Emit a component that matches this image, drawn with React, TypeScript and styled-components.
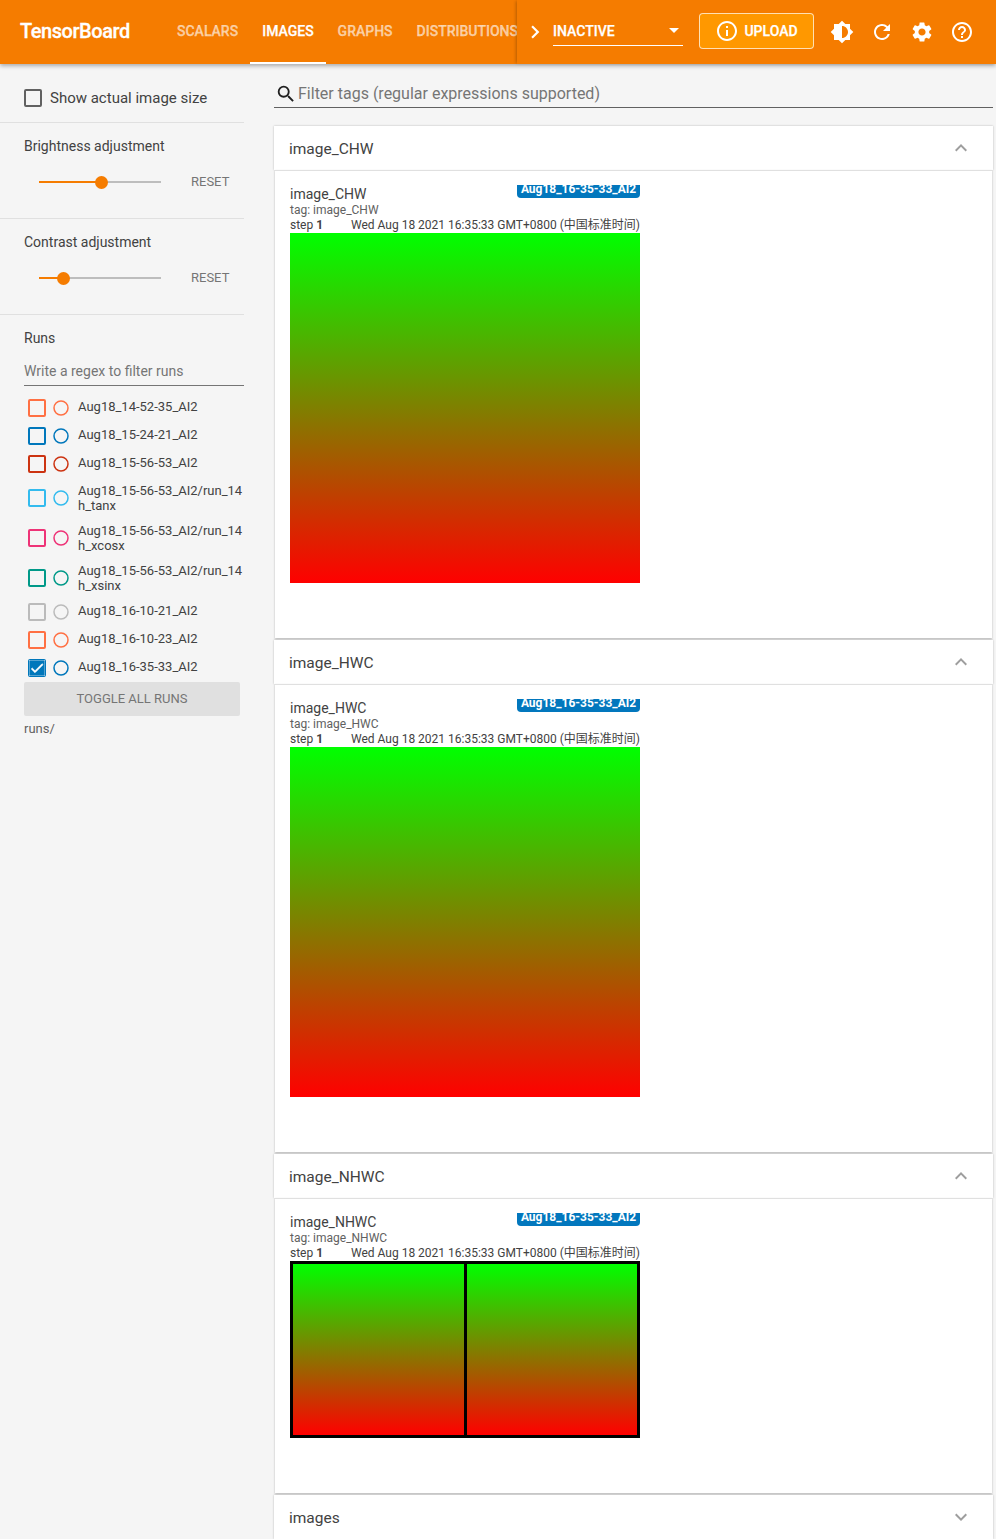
import React from 'react';
import styled, { createGlobalStyle } from 'styled-components';
import { MdBrightness6, MdRefresh, MdSettings, MdHelpOutline, MdInfoOutline, MdSearch, MdExpandLess, MdExpandMore, MdChevronRight, MdCheck } from 'react-icons/md';

const Global = createGlobalStyle`
  html, body { margin: 0; padding: 0; background: #f5f5f5; }
  body { font-family: Roboto, "Noto Sans CJK SC", sans-serif; color: #424242; }
  * { box-sizing: border-box; }
  #root { width: 996px; height: 1539px; overflow: hidden; }
`;

const Page = styled.div`
  width: 996px;
  height: 1539px;
  display: flex;
  flex-direction: column;
  overflow: hidden;
`;
const Header = styled.header`
  height: 64px;
  flex: none;
  background: #f57c00;
  color: #fff;
  display: flex;
  align-items: stretch;
  position: relative;
  z-index: 2;
  box-shadow: 0 2px 4px rgba(0, 0, 0, 0.3);
`;
const Logo = styled.div`
  width: 165px;
  flex: none;
  padding-left: 20px;
  font-size: 20px;
  font-weight: 500;
  line-height: 63px;
  letter-spacing: -0.45px;
  -webkit-text-stroke: 0.3px #fff;
`;
const Tabs = styled.nav`
  width: 352px;
  flex: none;
  display: flex;
  overflow: hidden;
`;
const Tab = styled.div<{ $active?: boolean }>`
  flex: none;
  height: 64px;
  padding: 0 12px;
  line-height: 62px;
  font-size: 14px;
  font-weight: 500;
  color: ${p => (p.$active ? '#fff' : 'rgba(255, 255, 255, 0.6)')};
  -webkit-text-stroke: 0.25px ${p => (p.$active ? '#fff' : 'rgba(255, 255, 255, 0.6)')};
  border-bottom: 2px solid ${p => (p.$active ? '#fff' : 'transparent')};
`;
const Right = styled.div`
  flex: 1;
  display: flex;
  align-items: center;
  box-shadow: -2px 0 3px -1px rgba(0, 0, 0, 0.25);
`;
const Chevron = styled.div`
  width: 36px;
  flex: none;
  display: flex;
  justify-content: center;
  svg { display: block; }
`;
const Select = styled.div`
  width: 130px;
  height: 30px;
  margin-bottom: 3px;
  padding: 1px 4px 0 0;
  flex: none;
  border-bottom: 1px solid #fff;
  display: flex;
  align-items: center;
  justify-content: space-between;
  font-size: 14px;
  font-weight: 500;
  -webkit-text-stroke: 0.25px #fff;
`;
const Caret = styled.span`
  width: 0;
  height: 0;
  border-left: 5px solid transparent;
  border-right: 5px solid transparent;
  border-top: 5px solid #fff;
`;
const Upload = styled.div`
  width: 115px;
  height: 36px;
  margin: 0 0 2px 16px;
  flex: none;
  background: #ff9800;
  border: 1px solid rgba(255, 255, 255, 0.7);
  border-radius: 4px;
  display: flex;
  align-items: center;
  justify-content: center;
  gap: 5px;
  font-size: 14px;
  font-weight: 500;
  -webkit-text-stroke: 0.25px #fff;
  padding-bottom: 1px;
  svg { display: block; -webkit-text-stroke: 0; }
`;
const Icons = styled.div`
  display: flex;
  margin-left: 8px;
`;
const IconButton = styled.div`
  width: 40px;
  height: 40px;
  display: flex;
  align-items: center;
  justify-content: center;
  svg { display: block; }
`;

const Body = styled.div`
  flex: 1;
  display: flex;
  min-height: 0;
`;
const Sidebar = styled.aside`
  width: 274px;
  flex: none;
  padding-right: 30px;
`;
const Section = styled.section`
  border-bottom: 1px solid #e0e0e0;
  padding: 15px 0 0 24px;
`;
const ActualRow = styled.div`
  height: 59px;
  display: flex;
  align-items: center;
  gap: 8px;
  padding: 10px 0 0 24px;
  border-bottom: 1px solid #e0e0e0;
  font-size: 15px;
  color: #424242;
`;
const PlainBox = styled.span`
  width: 18px;
  height: 18px;
  border: 2px solid #616161;
  border-radius: 2px;
  flex: none;
`;
const Label = styled.div`
  font-size: 14px;
  line-height: 16px;
  color: #424242;
`;
const SliderSection = styled(Section)`
  height: 96px;
`;
const SliderRow = styled.div`
  display: flex;
  align-items: center;
  height: 20px;
  margin-top: 18px;
  padding-left: 15px;
`;
const Track = styled.div`
  width: 122px;
  height: 2px;
  background: #bdbdbd;
  position: relative;
`;
const Fill = styled.div`
  height: 2px;
  background: #f57c00;
`;
const Thumb = styled.div`
  position: absolute;
  top: -5.5px;
  width: 13px;
  height: 13px;
  margin-left: -6px;
  border-radius: 50%;
  background: #f57c00;
`;
const Reset = styled.div`
  margin: 0 0 2px 30px;
  font-size: 13px;
  color: #757575;
`;
const RunsSection = styled.section`
  padding: 15px 0 0 24px;
`;
const RegexInput = styled.div`
  height: 31px;
  margin-top: 9px;
  border-bottom: 1px solid #757575;
  font-size: 14px;
  line-height: 25px;
  padding-top: 4px;
  color: #757575;
`;
const RunList = styled.div`
  margin: 8px 0 0 4px;
`;
const RunRow = styled.div<{ $tall?: boolean }>`
  height: ${p => (p.$tall ? 40 : 28)}px;
  display: flex;
  align-items: center;
`;
const RunBox = styled.span<{ $c: string; $on?: boolean }>`
  width: 18px;
  height: 18px;
  flex: none;
  border: 2px solid ${p => p.$c};
  background: ${p => (p.$on ? p.$c : 'transparent')};
  border-radius: 2px;
  color: #fff;
  display: flex;
  align-items: center;
  justify-content: center;
  svg { display: block; flex: none; }
`;
const RunDot = styled.svg`
  width: 16px;
  height: 16px;
  flex: none;
  margin-left: 7px;
  display: block;
`;
const RunName = styled.span<{ $tall?: boolean }>`
  margin-left: 9px;
  width: 166px;
  font-size: 13px;
  line-height: 15px;
  color: #424242;
  word-break: break-all;
  margin-top: ${p => (p.$tall ? 0 : -4)}px;
`;
const ToggleAll = styled.div`
  width: 216px;
  height: 34px;
  background: #e0e0e0;
  border-radius: 2px;
  text-align: center;
  font-size: 13px;
  line-height: 34px;
  color: #757575;
`;
const RunsDir = styled.div`
  margin-top: 6px;
  font-size: 13px;
  line-height: 14px;
  color: #616161;
`;

const Main = styled.main`
  width: 719px;
  flex: none;
`;
const FilterBar = styled.div`
  height: 44px;
  border-bottom: 1px solid #616161;
  display: flex;
  align-items: center;
  padding-top: 16px;
  padding-left: 1px;
  gap: 1px;
  font-size: 16px;
  color: #757575;
  svg { display: block; color: #212121; flex: none; }
`;
const Cards = styled.div`
  margin-top: 18px;
  display: flex;
  flex-direction: column;
  gap: 2px;
`;
const Card = styled.section`
  display: flex;
  flex-direction: column;
`;
const CardHeader = styled.div`
  height: 44px;
  padding: 0 20px 0 15px;
  background: #fff;
  box-shadow: 0 0 2px rgba(0, 0, 0, 0.25);
  display: flex;
  align-items: center;
  justify-content: space-between;
  svg { display: block; color: #9e9e9e; }
`;
const CardTitle = styled.span`
  margin-top: 2px;
  font-size: 15.5px;
  color: #424242;
`;
const CardBody = styled.div<{ $h: number }>`
  height: ${p => p.$h}px;
  margin: 0 1px;
  background: #fff;
  box-shadow: 0 1px 2px rgba(0, 0, 0, 0.25);
  border-top: 1px solid #e0e0e0;
  padding: 14px 15px 0;
`;
const Item = styled.div`
  width: 350px;
`;
const TitleRow = styled.div`
  display: flex;
  justify-content: space-between;
  align-items: flex-start;
  height: 24px;
`;
const ItemTitle = styled.div`
  font-size: 14px;
  line-height: 16px;
  color: #424242;
  padding-top: 1px;
`;
const RunTag = styled.div`
  width: 123px;
  height: 13px;
  background: #0277bd;
  border-radius: 0 0 4px 4px;
  overflow: hidden;
  color: #fff;
  font-size: 12px;
  font-weight: 700;
  line-height: 8px;
  text-align: center;
  white-space: nowrap;
`;
const Tag = styled.div`
  font-size: 12px;
  line-height: 14px;
  margin-top: -7px;
  padding-top: 1px;
  color: #616161;
`;
const StepRow = styled.div`
  display: flex;
  justify-content: space-between;
  align-items: baseline;
  height: 15px;
  margin-top: 1px;
  font-size: 12px;
  line-height: 14px;
  color: #424242;
  white-space: nowrap;
  b { font-weight: 700; margin-left: 3px; }
`;
const GradientImage = styled.div`
  width: 350px;
  height: 350px;
  background: linear-gradient(#00ff00, #ff0000);
`;
const GridImage = styled.div`
  width: 350px;
  height: 177px;
  display: grid;
  grid-template-columns: 1fr 1fr;
  gap: 3px;
  padding: 3px;
  background: #000;
`;
const GridCell = styled.div`
  background: linear-gradient(#00ff00, #ff0000);
`;

const runs = [
  { n: 'Aug18_14-52-35_AI2', c: '#ff7043' },
  { n: 'Aug18_15-24-21_AI2', c: '#0077bb' },
  { n: 'Aug18_15-56-53_AI2', c: '#cc3311' },
  { n: 'Aug18_15-56-53_AI2/run_14h_tanx', c: '#33bbee', tall: true },
  { n: 'Aug18_15-56-53_AI2/run_14h_xcosx', c: '#ee3377', tall: true },
  { n: 'Aug18_15-56-53_AI2/run_14h_xsinx', c: '#009988', tall: true },
  { n: 'Aug18_16-10-21_AI2', c: '#bbbbbb' },
  { n: 'Aug18_16-10-23_AI2', c: '#ff7043' },
  { n: 'Aug18_16-35-33_AI2', c: '#0077bb', on: true },
];

function ImageCard({ name, h, grid }: { name: string; h: number; grid?: boolean }) {
  return (
    <Card>
      <CardHeader>
        <CardTitle>{name}</CardTitle>
        <MdExpandLess size={24} />
      </CardHeader>
      <CardBody $h={h}>
        <Item>
          <TitleRow>
            <ItemTitle>{name}</ItemTitle>
            <RunTag>Aug18_16-35-33_AI2</RunTag>
          </TitleRow>
          <Tag>tag: {name}</Tag>
          <StepRow>
            <span>step<b>1</b></span>
            <span>Wed Aug 18 2021 16:35:33 GMT+0800 (中国标准时间)</span>
          </StepRow>
          {grid ? (
            <GridImage>
              <GridCell />
              <GridCell />
            </GridImage>
          ) : (
            <GradientImage />
          )}
        </Item>
      </CardBody>
    </Card>
  );
}

function Slider({ label, pct }: { label: string; pct: number }) {
  return (
    <SliderSection>
      <Label>{label}</Label>
      <SliderRow>
        <Track>
          <Fill style={{ width: `${pct}%` }} />
          <Thumb style={{ left: `${pct}%` }} />
        </Track>
        <Reset>RESET</Reset>
      </SliderRow>
    </SliderSection>
  );
}

export default function App() {
  return (
    <Page>
      <Global />
      <Header>
        <Logo>TensorBoard</Logo>
        <Tabs>
          <Tab>SCALARS</Tab>
          <Tab $active>IMAGES</Tab>
          <Tab>GRAPHS</Tab>
          <Tab>DISTRIBUTIONS</Tab>
        </Tabs>
        <Right>
          <Chevron><MdChevronRight size={26} /></Chevron>
          <Select>INACTIVE<Caret /></Select>
          <Upload><MdInfoOutline size={24} />UPLOAD</Upload>
          <Icons>
            <IconButton><MdBrightness6 size={24} /></IconButton>
            <IconButton><MdRefresh size={24} /></IconButton>
            <IconButton><MdSettings size={24} /></IconButton>
            <IconButton><MdHelpOutline size={24} /></IconButton>
          </Icons>
        </Right>
      </Header>
      <Body>
        <Sidebar>
          <ActualRow>
            <PlainBox />
            Show actual image size
          </ActualRow>
          <Slider label="Brightness adjustment" pct={51} />
          <Slider label="Contrast adjustment" pct={20} />
          <RunsSection>
            <Label>Runs</Label>
            <RegexInput>Write a regex to filter runs</RegexInput>
            <RunList>
              {runs.map(r => (
                <RunRow key={r.n + r.c} $tall={r.tall}>
                  <RunBox $c={r.c} $on={r.on}>
                    {r.on && <MdCheck size={16} stroke="currentColor" strokeWidth={1} />}
                  </RunBox>
                  <RunDot viewBox="0 0 16 16">
                    <circle cx="8" cy="8" r="7" fill="none" stroke={r.c} strokeWidth="1.5" />
                  </RunDot>
                  <RunName $tall={r.tall}>{r.n}</RunName>
                </RunRow>
              ))}
            </RunList>
            <ToggleAll>TOGGLE ALL RUNS</ToggleAll>
            <RunsDir>runs/</RunsDir>
          </RunsSection>
        </Sidebar>
        <Main>
          <FilterBar>
            <MdSearch size={22} />
            Filter tags (regular expressions supported)
          </FilterBar>
          <Cards>
            <ImageCard name="image_CHW" h={468} />
            <ImageCard name="image_HWC" h={468} />
            <ImageCard name="image_NHWC" h={295} grid />
            <Card>
              <CardHeader>
                <CardTitle>images</CardTitle>
                <MdExpandMore size={24} />
              </CardHeader>
            </Card>
          </Cards>
        </Main>
      </Body>
    </Page>
  );
}
